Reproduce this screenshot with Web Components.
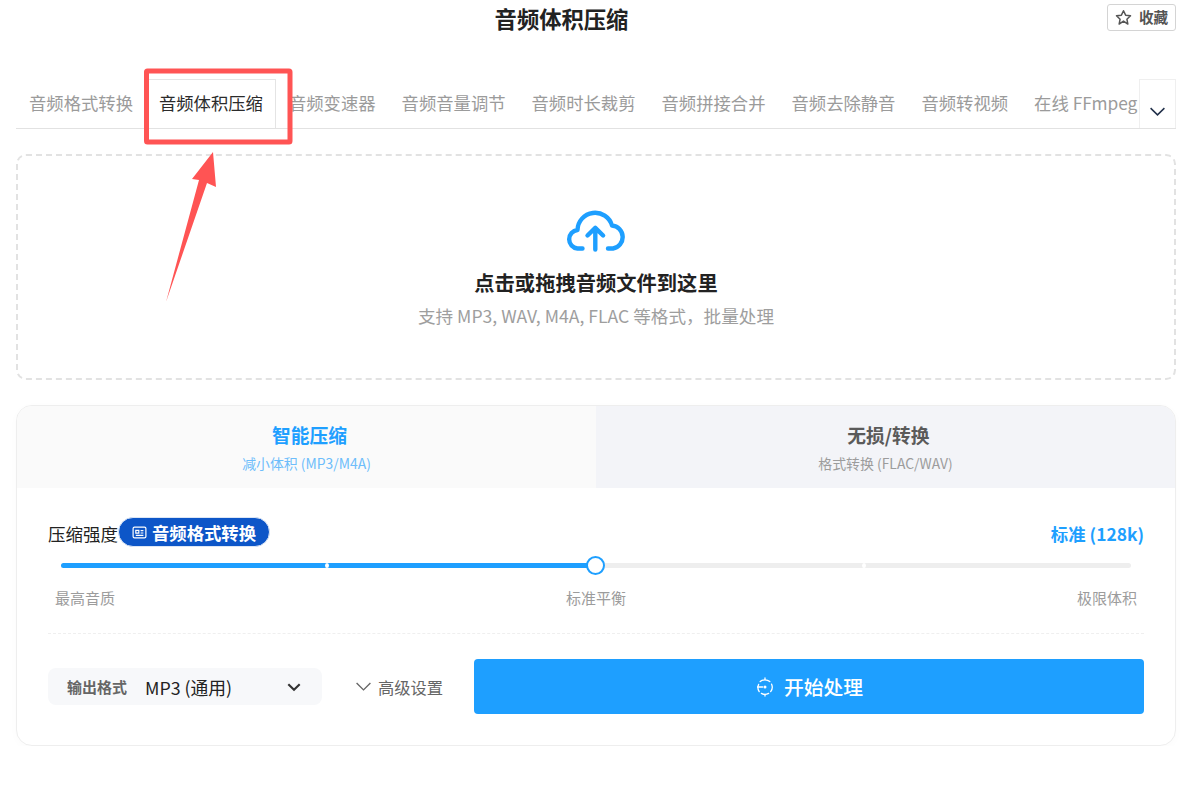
<!DOCTYPE html>
<html lang="zh">
<head>
<meta charset="utf-8">
<title>音频体积压缩</title>
<style>
  html, body { margin: 0; background: #fff; }
  body { font-family: "Noto Sans CJK SC", "Liberation Sans", sans-serif; color: #333; }
</style>
</head>
<body>
<audio-page></audio-page>

<script>
// Petit utilitaire pour créer un élément avec son shadow DOM
class Base extends HTMLElement {
  connectedCallback() {
    if (!this.shadowRoot) {
      this.attachShadow({ mode: 'open' });
      this.shadowRoot.innerHTML = this.render();
    }
  }
}

const CHEVRON = (size, color, width) => `
  <svg width="${size}" height="${size}" viewBox="0 0 16 16" fill="none" stroke="${color}" stroke-width="${width}">
    <path d="M1.5 4.8 8 11.2l6.5-6.4"/>
  </svg>`;

class AppHeader extends Base {
  render() {
    return `
      <style>
        :host { display: flex; align-items: flex-start; padding-top: 4px; height: 27px; }
        h1 { flex: 1; margin: -3px 0 0; font-size: 22.3px; line-height: 34px; font-weight: 700; text-align: center; color: #222; }
        button {
          width: 69px; height: 27px; padding: 0 0 1px; display: flex; align-items: center; justify-content: center; gap: 7px;
          background: #fff; border: 1px solid #d4d4d4; border-radius: 3px;
          font: 700 14.6px "Noto Sans CJK SC", sans-serif; color: #555;
        }
        button span { position: relative; top: -1px; }
      </style>
      <h1><slot></slot></h1>
      <button>
        <svg width="17" height="17" viewBox="0 0 16 16" fill="none" stroke="#555" stroke-width="1.4" stroke-linejoin="round">
          <path d="M8 1.6l2 4.2 4.6.6-3.4 3.2.9 4.6L8 11.4l-4.1 2.8.9-4.6L1.4 6.4 6 5.8z"/>
        </svg>
        <span>收藏</span>
      </button>`;
  }
}

class TabBar extends Base {
  render() {
    return `
      <style>
        :host { display: flex; margin-top: 48px; border-bottom: 1px solid #e2e2e2; height: 49px; }
        .list { flex: 1; min-width: 0; display: flex; overflow: hidden; }
        .more { flex: none; width: 37px; box-sizing: border-box; border: 1px solid #efefef; border-bottom: 0; display: flex; align-items: flex-end; justify-content: center; padding-bottom: 8px; }
      </style>
      <div class="list"><slot></slot></div>
      <div class="more">${CHEVRON(17, '#22304a', 1.4)}</div>`;
  }
}

class TabItem extends Base {
  render() {
    return `
      <style>
        :host { flex: none; display: block; box-sizing: border-box; height: 50px; padding: 0 12px; border: 1px solid transparent; border-bottom: 0;
          font-size: 17.33px; line-height: 46px; color: #9b9b9b; white-space: nowrap; }
        :host([active]) { color: #2b2b2b; border-color: #e4e4e4; background: #fff; }
      </style>
      <slot></slot>`;
  }
}

class DropZone extends Base {
  render() {
    return `
      <style>
        :host { display: flex; flex-direction: column; align-items: center; box-sizing: border-box; height: 226px; margin-top: 25px; padding-top: 54px;
          border: 2px dashed #e2e2e2; border-radius: 10px; }
        svg { display: block; }
        b { margin-top: 13px; font-size: 20.3px; line-height: 34px; color: #222; }
        span { margin-top: 3px; font-size: 17.6px; line-height: 28px; color: #9e9e9e; }
      </style>
      <svg width="60" height="42" viewBox="0 0 60 42" fill="none" stroke="#1e9fff" stroke-width="4.4" stroke-linecap="round" stroke-linejoin="round">
        <path d="M16.5 38.5H11.5A9.3 9.3 0 0 1 11.5 20A17.6 17.6 0 0 1 46 15.5A11.6 11.6 0 0 1 47 38.5H42"/>
        <path d="M29.3 39.5V18.5M21.5 25.5l7.8-7.6 7.8 7.6"/>
      </svg>
      <b>点击或拖拽音频文件到这里</b>
      <span>支持 MP3, WAV, M4A, FLAC 等格式，批量处理</span>`;
  }
}

class ModeTab extends Base {
  render() {
    return `
      <style>
        :host { flex: 1; display: flex; flex-direction: column; align-items: center; height: 82px; padding-top: 16px; box-sizing: border-box; background: #f3f4f8; color: #5a5a5a; }
        :host([active]) { background: #fafafa; color: #1e9fff; }
        b { margin-left: 6px; font-size: 18.75px; line-height: 26px; }
        small { margin-top: 6px; font-size: 13.9px; line-height: 18px; color: #9c9c9c; }
        :host([active]) small { color: #6dbdfb; }
      </style>
      <b>${this.getAttribute('title')}</b>
      <small>${this.getAttribute('sub')}</small>`;
  }
}

class StrengthSlider extends Base {
  render() {
    return `
      <style>
        :host { display: block; }
        .head { display: flex; align-items: center; height: 30px; font-size: 17.5px; color: #222; }
        .head b { margin-left: auto; color: #1e9fff; font-size: 17.4px; position: relative; top: 1px; }
        .name { position: relative; top: 1px; }
        .pill { display: inline-flex; align-items: center; gap: 5px; box-sizing: border-box; width: 152px; height: 30px; padding: 1px 0 0 13px; border: 1px solid #dce6f5; border-radius: 15px;
          background: #0d56c8; color: #fff; font-weight: 700; font-size: 17.33px; }
        .track { position: relative; height: 5px; margin: 16px 13px 0; border-radius: 3px; background: #eeeeee; }
        .fill { position: absolute; left: 0; top: 0; bottom: 0; width: 50%; border-radius: 3px; background: #1e9fff; }
        .tick { position: absolute; top: 0; width: 4px; height: 5px; background: #fff; border-radius: 50%; }
        .thumb { position: absolute; left: 50%; top: 50%; width: 15px; height: 15px; margin: -9.5px 0 0 -10px; background: #fff; border: 2px solid #1e9fff; border-radius: 50%; }
        .scale { display: flex; justify-content: space-between; margin: 19px 7px 0; font-size: 15px; line-height: 22px; color: #9c9c9c; }
      </style>
      <div class="head">
        <span class="name">压缩强度</span>
        <span class="pill">
          <svg width="15" height="15" viewBox="0 0 15 15" fill="none" stroke="#fff" stroke-width="1.2">
            <rect x="1.1" y="2.1" width="12.8" height="10.8" rx="1.4"/>
            <path d="M3.8 5.4h3v2.8h-3zM8.6 5.6h2.8M8.6 8h2.8M3.8 10.4h7.6"/>
          </svg>
          音频格式转换
        </span>
        <b>标准 (128k)</b>
      </div>
      <div class="track">
        <div class="fill"></div>
        <i class="tick" style="left:24.7%"></i>
        <i class="tick" style="left:74.85%"></i>
        <div class="thumb"></div>
      </div>
      <div class="scale"><span>最高音质</span><span>标准平衡</span><span>极限体积</span></div>`;
  }
}

class ActionBar extends Base {
  render() {
    return `
      <style>
        :host { display: flex; align-items: center; height: 55px; }
        .select { flex: none; width: 274px; height: 37px; box-sizing: border-box; display: flex; align-items: center; padding: 0 21px 0 19px; border-radius: 8px; background: #f7f8fa; }
        .select b { font-size: 15px; color: #666; width: 78px; }
        .select span { flex: 1; font-size: 17.8px; color: #222; }
        .adv { flex: none; display: flex; align-items: center; gap: 6px; width: 152px; box-sizing: border-box; padding-left: 33px; font-size: 16.3px; color: #666; }
        button { flex: 1; height: 55px; display: flex; align-items: center; justify-content: center; gap: 9px; border: 0; border-radius: 4px; background: #1e9fff; color: #fff; font: 500 19.8px "Noto Sans CJK SC", sans-serif; }
      </style>
      <div class="select">
        <b>输出格式</b><span>MP3 (通用)</span>
        ${CHEVRON(14, '#333', 2.4)}
      </div>
      <div class="adv">${CHEVRON(17, '#666', 1.3)}<span>高级设置</span></div>
      <button>
        <svg width="20" height="20" viewBox="0 0 20 20" fill="none" stroke="#fff" stroke-width="1.3" stroke-linecap="round">
          <path d="M5.2 4.6A7.3 7.3 0 0 1 14.8 4.6M16.6 7.2a7.3 7.3 0 0 1-.9 7.4M13.6 16.4a7.3 7.3 0 0 1-7.2 0M4.2 14.6a7.3 7.3 0 0 1-.6-7.2"/>
          <path d="M10 1v1.6M10 17.4V19M2.6 10h5"/>
          <circle cx="10" cy="10" r="1.5" fill="#fff" stroke="none"/>
        </svg>
        开始处理
      </button>`;
  }
}

class SettingsPanel extends Base {
  render() {
    return `
      <style>
        :host { display: block; margin-top: 25px; border: 1px solid #eeeeee; border-radius: 16px; overflow: hidden; background: #fff; box-shadow: 0 2px 10px rgba(0,0,0,.02); }
        .modes { display: flex; }
        .body { padding: 29px 31px 31px; }
        hr { height: 0; margin: 24px 0 25px; border: 0; border-top: 1px dashed #efefef; }
      </style>
      <div class="modes">
        <mode-tab active title="智能压缩" sub="减小体积 (MP3/M4A)"></mode-tab>
        <mode-tab title="无损/转换" sub="格式转换 (FLAC/WAV)"></mode-tab>
      </div>
      <div class="body">
        <strength-slider></strength-slider>
        <hr>
        <action-bar></action-bar>
      </div>`;
  }
}

// Annotation rouge posée par-dessus la capture : cadre et flèche
class RedCallout extends Base {
  render() {
    return `
      <style>
        :host { position: absolute; left: 0; top: 0; width: 1184px; height: 320px; pointer-events: none; }
      </style>
      <svg width="1184" height="320" viewBox="0 0 1184 320">
        <rect x="146.5" y="71" width="143.5" height="71" rx="1" fill="none" stroke="#ff5454" stroke-width="5"/>
        <path d="M213 152 216 187 207 183 166 302 199 180 192 179z" fill="#ff5454"/>
      </svg>`;
  }
}

class AudioPage extends Base {
  render() {
    return `
      <style>
        :host { display: block; position: relative; padding: 0 8px 0 16px; width: 1160px; box-sizing: content-box; }
      </style>
      <app-header>音频体积压缩</app-header>
      <tab-bar>
        <tab-item>音频格式转换</tab-item>
        <tab-item active>音频体积压缩</tab-item>
        <tab-item>音频变速器</tab-item>
        <tab-item>音频音量调节</tab-item>
        <tab-item>音频时长裁剪</tab-item>
        <tab-item>音频拼接合并</tab-item>
        <tab-item>音频去除静音</tab-item>
        <tab-item>音频转视频</tab-item>
        <tab-item>在线 FFmpeg 工具</tab-item>
      </tab-bar>
      <drop-zone></drop-zone>
      <settings-panel></settings-panel>
      <red-callout></red-callout>`;
  }
}

customElements.define('app-header', AppHeader);
customElements.define('tab-bar', TabBar);
customElements.define('tab-item', TabItem);
customElements.define('drop-zone', DropZone);
customElements.define('mode-tab', ModeTab);
customElements.define('strength-slider', StrengthSlider);
customElements.define('action-bar', ActionBar);
customElements.define('settings-panel', SettingsPanel);
customElements.define('red-callout', RedCallout);
customElements.define('audio-page', AudioPage);
</script>
</body>
</html>
